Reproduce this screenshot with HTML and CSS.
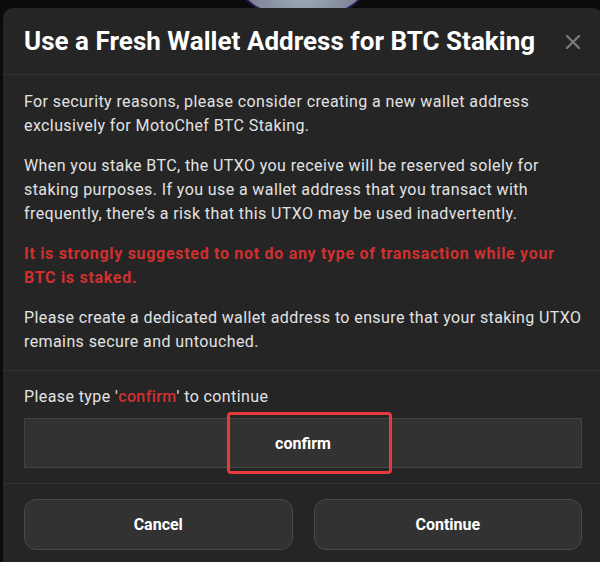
FILE: index.html
```html
<!DOCTYPE html>
<html>
<head>
<meta charset="utf-8">
<link rel="stylesheet" href="styles.css">
</head>
<body>
<div class="backdrop-avatar"></div>
<div class="modal">
  <div class="modal-header">
    <h2 class="modal-title">Use a Fresh Wallet Address for BTC Staking</h2>
    <svg class="close" width="16" height="16" viewBox="0 0 16 16"><path d="M2 2 L14 14 M14 2 L2 14" stroke="#7a7a7a" stroke-width="2.4" stroke-linecap="round"/></svg>
  </div>
  <div class="modal-body">
    <p>For security reasons, please consider creating a new wallet address exclusively for MotoChef BTC Staking.</p>
    <p>When you stake BTC, the UTXO you receive will be reserved solely for staking purposes. If you use a wallet address that you transact with frequently, there’s a risk that this UTXO may be used inadvertently.</p>
    <p class="warn">It is strongly suggested to not do any type of transaction while your BTC is staked.</p>
    <p>Please create a dedicated wallet address to ensure that your staking UTXO remains secure and untouched.</p>
  </div>
  <div class="confirm-section">
    <div class="confirm-label">Please type '<span class="red">confirm</span>' to continue</div>
    <div class="confirm-input">
      <span>confirm</span>
      <div class="highlight"></div>
    </div>
  </div>
  <div class="modal-footer">
    <button class="btn">Cancel</button>
    <button class="btn">Continue</button>
  </div>
</div>
</body>
</html>
```
FILE: styles.css
```css
html, body {
  margin: 0;
  padding: 0;
  height: 562px;
  overflow: hidden;
  background: #0b0b0c;
}
body {
  position: relative;
  font-family: Roboto, "Liberation Sans", sans-serif;
}
.backdrop-avatar {
  position: absolute;
  left: 237px;
  top: -60px;
  width: 128px;
  height: 76px;
  border-radius: 50%;
  background: radial-gradient(circle at 50% 60%, #a3adbd 0%, #7c8596 70%, #5d6575 100%);
  border: 2px solid #2b1a55;
}
.modal {
  position: relative;
  margin: 8px 0 0 3px;
  width: 600px;
  height: 600px;
  background: #252525;
  border-radius: 10px;
  box-sizing: border-box;
}
.modal-header {
  height: 67px;
  box-sizing: border-box;
  border-bottom: 1px solid #333;
  padding: 0 21px;
  display: flex;
  align-items: center;
  justify-content: space-between;
}
.modal-title {
  margin: 0;
  font-size: 26px;
  font-weight: 700;
  color: #fff;
  letter-spacing: 0.03px;
}
.close {
  margin-right: 1px;
  margin-top: 1px;
}
.modal-body {
  padding: 15px 21px 16px;
  border-bottom: 1px solid #333;
  display: flex;
  flex-direction: column;
  gap: 16px;
}
.modal-body p {
  margin: 0;
  font-size: 16px;
  line-height: 24px;
  color: #e2e2e2;
  letter-spacing: 0.4px;
}
.modal-body p.warn {
  color: #d0302f;
  font-weight: 700;
  letter-spacing: 0.7px;
}
.confirm-section {
  padding: 14px 21px 15px;
  border-bottom: 1px solid #333;
}
.confirm-label {
  font-size: 16px;
  line-height: 24px;
  color: #e2e2e2;
  letter-spacing: 0.4px;
  margin-bottom: 9px;
}
.red { color: #d0302f; font-weight: 500; }
.confirm-input {
  position: relative;
  height: 50px;
  box-sizing: border-box;
  border: 1px solid #444;
  background: #323232;
  display: flex;
  align-items: center;
  justify-content: center;
  color: #fff;
  font-weight: 700;
  font-size: 16px;
}
.highlight {
  position: absolute;
  left: 202px;
  top: -7px;
  width: 165px;
  height: 62px;
  box-sizing: border-box;
  border: 3px solid #e8393c;
  border-radius: 4px;
}
.modal-footer {
  padding: 15px 21px;
  display: flex;
  gap: 21px;
}
.btn {
  flex: 1;
  height: 51px;
  border-radius: 12px;
  border: 1px solid #484848;
  background: #323232;
  color: #fff;
  font-family: Roboto, "Liberation Sans", sans-serif;
  font-weight: 700;
  font-size: 16px;
}
```
